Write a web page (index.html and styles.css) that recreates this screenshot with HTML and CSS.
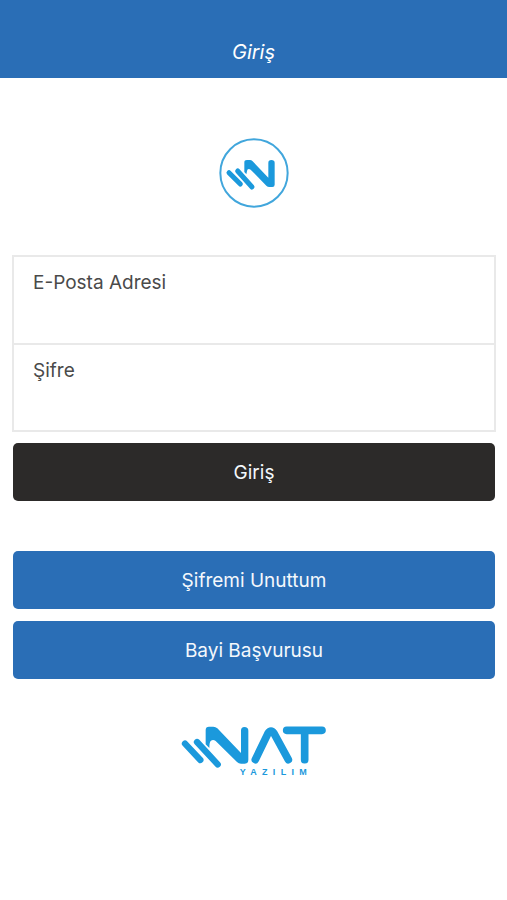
FILE: index.html
```html
<!DOCTYPE html>
<html lang="tr">
<head>
<meta charset="utf-8">
<meta name="viewport" content="width=device-width, initial-scale=1">
<title>Giriş</title>
<link rel="stylesheet" href="styles.css">
</head>
<body>
<header class="topbar"><h1 class="title">Giriş</h1></header>
<main class="content">
  <svg class="emblem" viewBox="24 24 216 216" aria-hidden="true">
    <circle class="line ring" cx="132" cy="129" r="101"/>
    <path class="line bar" d="M57 128 91 162M83 123 126 171"/>
    <path class="shape" d="M103 97Q103 90 111 90H120Q124 90 128 94L175 143V98Q175 90 184 90Q194 90 194 98V164Q194 171 187 171H178Q173 171 169 167L122 119Q116 115 112 119L109 133L103 126Z"/>
  </svg>
  <form class="login">
    <div class="fields">
      <div class="field">
        <label for="email">E-Posta Adresi</label>
        <input id="email" type="email" autocomplete="username">
      </div>
      <div class="field">
        <label for="password">Şifre</label>
        <input id="password" type="password" autocomplete="current-password">
      </div>
    </div>
    <button class="button dark" type="submit">Giriş</button>
  </form>
  <div class="actions">
    <button class="button" type="button">Şifremi Unuttum</button>
    <button class="button" type="button">Bayi Başvurusu</button>
  </div>
  <svg class="brand" viewBox="30 30 444 156" role="img" aria-label="NAT Yazılım">
    <path class="line stripe" d="M45 86 91 135M81 81 143 148"/>
    <path class="shape" d="M107 45Q107 35 117 35H130Q137 35 142 40L213 114V47Q213 36 223 36Q235 36 235 47V134Q235 146 224 146H213Q206 146 201 141L137 78Q129 72 122 78Q118 82 118 99L107 88Z"/>
    <path class="line peak" d="M256 134 294 55Q303 41 312 55L355 134"/>
    <path class="line beam" d="M350 46H456M404 46V134"/>
    <text class="tagline" x="209" y="180">YAZILIM</text>
  </svg>
</main>
</body>
</html>
```
FILE: styles.css
```css
* { box-sizing: border-box; }

body {
  margin: 0;
  background: #fff;
  color: #4a4a4a;
  font-family: Inter, "Liberation Sans", sans-serif;
  font-size: 19px;
  line-height: 24px;
}

.topbar {
  padding: 40px 16px 14px;
  background: #2a6eb6;
  color: #fff;
  text-align: center;
}

.title {
  margin: 0;
  font-size: 20px;
  font-style: italic;
  font-weight: 400;
  line-height: 24px;
}

.content {
  display: flex;
  flex-direction: column;
  align-items: center;
  padding: 60px 11px 60px 12px;
}

.emblem { width: 72px; height: 72px; }

.login {
  display: flex;
  flex-direction: column;
  gap: 11px;
  width: 100%;
  margin-top: 45px;
}

.fields { border: 2px solid #e9e9e9; }

.field {
  display: flex;
  flex-direction: column;
  height: 86px;
  padding: 14px 19px 6px;
}

.field + .field {
  height: 87px;
  border-top: 2px solid #e9e9e9;
}

.field input {
  flex: 1;
  min-height: 0;
  width: 100%;
  padding: 0;
  border: 0;
  outline: 0;
  background: transparent;
  color: inherit;
  font: inherit;
}

.button {
  height: 58px;
  margin: 0 1px;
  padding: 2px 6px 0;
  border: 0;
  border-radius: 5px;
  background: #2a6eb6;
  color: #f4f8fc;
  font: inherit;
}

.dark { background: #2c2a29; }

.actions {
  display: flex;
  flex-direction: column;
  gap: 12px;
  width: 100%;
  margin-top: 50px;
}

.brand {
  width: 148px;
  height: 52px;
  margin-top: 46px;
}

.shape { fill: #1b99dc; }

.line {
  fill: none;
  stroke: #1b99dc;
  stroke-linecap: round;
  stroke-linejoin: round;
}

.ring { stroke: #41a6dc; stroke-width: 6px; }
.bar { stroke-width: 15px; }
.stripe { stroke-width: 19px; }
.peak { stroke-width: 23px; }
.beam { stroke-width: 23px; }

.tagline {
  fill: #1b99dc;
  font-family: "Liberation Sans", Arial, sans-serif;
  font-size: 27px;
  font-weight: 700;
  letter-spacing: 16px;
}
```
